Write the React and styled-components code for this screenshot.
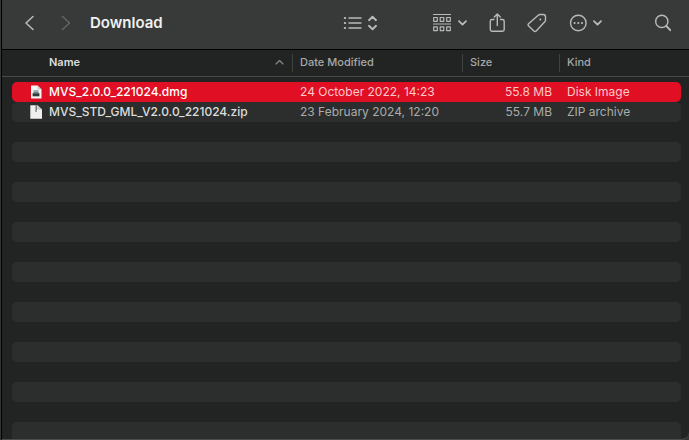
import React from "react";
import styled, { createGlobalStyle } from "styled-components";

const GlobalStyle = createGlobalStyle`
  * { box-sizing: border-box; }
  body {
    margin: 0;
    background: #000;
    font-family: Inter, "Liberation Sans", sans-serif;
  }
`;

const Desktop = styled.div`
  height: 100vh;
  padding-left: 1px;
  background: #343635;
`;

const Window = styled.main`
  display: flex;
  flex-direction: column;
  height: 100%;
  overflow: hidden;
  border-left: 1px solid #000;
  border-bottom: 1px solid #4c4e4d;
  border-bottom-right-radius: 8px;
  background: #222423;
`;

const Toolbar = styled.header`
  display: flex;
  flex: none;
  align-items: center;
  height: 50px;
  padding: 0 18px 4px 21px;
  border-bottom: 1px solid #000;
  background: #383a39;
`;

const NavButtons = styled.nav`
  display: flex;
  gap: 20px;
`;

const ToolButton = styled.button`
  display: flex;
  align-items: center;
  gap: ${(p) => p.$gap || 0}px;
  padding: 0;
  border: 0;
  background: none;
  color: ${(p) => (p.disabled ? "#656766" : "#b8bab9")};
`;

const Title = styled.h1`
  flex: 1;
  margin: 0 0 0 19px;
  color: #f0f1f0;
  font-size: 15px;
  font-weight: 600;
  line-height: 20px;
`;

const Actions = styled.div`
  display: flex;
  align-items: center;
  gap: ${(p) => p.$gap}px;
`;

const Icon = styled.svg`
  display: block;
  flex: none;
  fill: none;
  stroke: currentColor;
  stroke-width: 1.4;
  stroke-linecap: round;
  stroke-linejoin: round;
`;

const SortIcon = styled(Icon)`
  color: #8c8e8d;
  stroke-width: 1.1;
`;

const FileTable = styled.table`
  display: block;
`;

const TableHead = styled.thead`
  display: block;
  padding: 0 8px 0 10px;
  border-bottom: 1px solid #484a49;
`;

const TableBody = styled.tbody`
  display: block;
  padding: 5px 8px 0 10px;
`;

const Row = styled.tr`
  display: grid;
  grid-template-columns: minmax(0, 1fr) 170px 97px 122px;
  align-items: center;
  height: ${(p) => (p.$header ? 26 : 20)}px;
  border-radius: 5px;
  background: ${(p) => (p.$selected ? "#e00f23" : p.$striped ? "#2c2e2d" : "transparent")};
  color: ${(p) => (p.$selected ? "#ffc8cc" : "#aaacab")};
`;

const HeaderCell = styled.th`
  display: flex;
  align-items: center;
  justify-content: space-between;
  height: 18px;
  padding: 0 8px 2px ${(p) => (p.$main ? 37 : 7)}px;
  border-left: ${(p) => (p.$main ? "0" : "1px solid #404241")};
  color: ${(p) => (p.$main ? "#dcdedd" : "#a6a8a7")};
  font-size: 11px;
  font-weight: ${(p) => (p.$main ? 600 : 500)};
  text-align: left;
`;

const Cell = styled.td`
  padding: 0 7px 0 8px;
  font-size: 12px;
  line-height: 20px;
  text-align: ${(p) => (p.$end ? "right" : "left")};
  white-space: nowrap;
`;

const NameCell = styled(Cell)`
  display: flex;
  align-items: center;
  gap: 7px;
  padding-left: 18px;
  color: ${(p) => (p.$selected ? "#fff" : "#dcdedd")};
  font-weight: 500;
`;

const Chevron = () => (
  <Icon width="9" height="6" viewBox="0 0 9 6" aria-hidden="true">
    <path d="M1 1.200 4.500 4.600 8 1.200" strokeWidth="1.800" />
  </Icon>
);

const DiskFile = () => (
  <Icon width="12" height="14" viewBox="0 0 12 14" aria-hidden="true">
    <path d="M1 .5h6.500L11.500 4.500V13.500H1Z" fill="#f6f6f6" stroke="none" />
    <path d="M7.500.5v4h4Z" fill="#c9cccb" stroke="none" />
    <path d="M3.700 5h4.600l1 4.500H2.700Z" fill="#9fb0b4" stroke="none" />
    <path d="M2.600 8.300h6.800v3H2.600Z" fill="#35393a" stroke="none" />
    <path d="M4 7.300h4v1H4Z" fill="#5d6c72" stroke="none" />
  </Icon>
);

const ZipFile = () => (
  <Icon width="12" height="14" viewBox="0 0 12 14" aria-hidden="true">
    <path d="M.3.3h7.200L12 4.500V13.700H.3Z" fill="#efefef" stroke="none" />
    <path d="M7.500.3v4.200H12Z" fill="#c6c8c7" stroke="none" />
    <path d="M5.500.3H7v5H5.500Z" fill="#777978" stroke="none" />
    <path d="M5 5h2v2H5Z" fill="#a3a5a4" stroke="none" />
  </Icon>
);

const files = [
  { name: "MVS_2.0.0_221024.dmg", date: "24 October 2022, 14:23", size: "55.8 MB", kind: "Disk Image", icon: DiskFile, selected: true },
  { name: "MVS_STD_GML_V2.0.0_221024.zip", date: "23 February 2024, 12:20", size: "55.7 MB", kind: "ZIP archive", icon: ZipFile, selected: false },
];

const emptyRows = Array.from({ length: 40 }, (_, i) => i);

export default function App() {
  return (
    <Desktop>
      <GlobalStyle />
      <Window>
        <Toolbar>
          <NavButtons aria-label="History">
            <ToolButton aria-label="Back">
              <Icon width="14" height="16" viewBox="0 0 14 16"><path d="M10 1.500 3 8l7 6.500" strokeWidth="1.600" /></Icon>
            </ToolButton>
            <ToolButton aria-label="Forward" disabled>
              <Icon width="14" height="16" viewBox="0 0 14 16"><path d="M5.500 1.500 12.500 8l-7 6.500" /></Icon>
            </ToolButton>
          </NavButtons>
          <Title>Download</Title>
          <Actions $gap={52}>
            <Actions $gap={55}>
              <ToolButton aria-label="View as list" $gap={6}>
                <Icon width="19" height="16" viewBox="0 0 19 16">
                  <path d="M6 3h12M6 8h12M6 13h12" />
                  <path d="M1.700 3h.6M1.700 8h.6M1.700 13h.6" strokeWidth="1.800" />
                </Icon>
                <Icon width="9" height="16" viewBox="0 0 9 16">
                  <path d="M1 5.200 4.500 1.800 8 5.200M1 10.800l3.500 3.400L8 10.800" strokeWidth="1.900" />
                </Icon>
              </ToolButton>
              <Actions $gap={22}>
                <ToolButton aria-label="Group items" $gap={7}>
                  <Icon width="19" height="20" viewBox="0 0 19 20">
                    <path d="M1.500 1.500h17M1.500 11h17" strokeWidth="1.200" />
                    <path d="M1.700 4.500h3.600v3.800H1.700ZM8.200 4.500h3.600v3.800H8.200ZM14.700 4.500h3.600v3.800h-3.600ZM1.700 13.800h3.600v3.800H1.700ZM8.200 13.800h3.600v3.800H8.200ZM14.700 13.800h3.600v3.800h-3.600Z" strokeWidth="1.200" />
                  </Icon>
                  <Chevron />
                </ToolButton>
                <ToolButton aria-label="Share">
                  <Icon width="16" height="20" viewBox="0 0 16 20">
                    <path d="M5 6.500H3A1.700 1.700 0 0 0 1.300 8.200v8.400A1.700 1.700 0 0 0 3 18.300h10.500a1.700 1.700 0 0 0 1.700-1.700V8.200a1.700 1.700 0 0 0-1.700-1.700h-2M8.300 12.500V1.200M5.300 4l3-2.900 3 2.900" />
                  </Icon>
                </ToolButton>
                <ToolButton aria-label="Edit tags">
                  <Icon width="20" height="20" viewBox="0 0 20 20">
                    <path d="M11.200 2.200q.8-.7 1.800-.7h3.300q2.200 0 2.200 2.200v3.200q0 1-.7 1.800l-8.600 9.200q-1.100 1.200-2.300.1l-5.200-5q-1.200-1.100-.1-2.200Z" />
                    <circle cx="13.300" cy="6.500" r="1" fill="currentColor" stroke="none" />
                  </Icon>
                </ToolButton>
                <ToolButton aria-label="More actions" $gap={6}>
                  <Icon width="18" height="18" viewBox="0 0 18 18">
                    <circle cx="9.300" cy="9" r="7.800" />
                    <path d="M5.600 9h.01M9.300 9h.01M13 9h.01" strokeWidth="2.200" />
                  </Icon>
                  <Chevron />
                </ToolButton>
              </Actions>
            </Actions>
            <ToolButton aria-label="Search">
              <Icon width="17" height="18" viewBox="0 0 17 18">
                <circle cx="7.800" cy="7.400" r="6.100" />
                <path d="m12.300 12 4 4.200" strokeWidth="1.900" />
              </Icon>
            </ToolButton>
          </Actions>
        </Toolbar>
        <FileTable>
          <TableHead>
            <Row $header>
              <HeaderCell $main aria-sort="ascending">
                Name
                <SortIcon width="9" height="6" viewBox="0 0 9 6" aria-hidden="true"><path d="M1 5 4.500 1.500 8 5" /></SortIcon>
              </HeaderCell>
              <HeaderCell>Date Modified</HeaderCell>
              <HeaderCell>Size</HeaderCell>
              <HeaderCell>Kind</HeaderCell>
            </Row>
          </TableHead>
          <TableBody>
            {files.map(({ icon: FileIcon, ...file }, i) => (
              <Row key={file.name} $selected={file.selected} $striped={i % 2 === 1} aria-selected={file.selected}>
                <NameCell $selected={file.selected}><FileIcon />{file.name}</NameCell>
                <Cell>{file.date}</Cell>
                <Cell $end>{file.size}</Cell>
                <Cell>{file.kind}</Cell>
              </Row>
            ))}
            {emptyRows.map((i) => (
              <Row key={i} $striped={i % 2 === 1} aria-hidden="true" />
            ))}
          </TableBody>
        </FileTable>
      </Window>
    </Desktop>
  );
}
